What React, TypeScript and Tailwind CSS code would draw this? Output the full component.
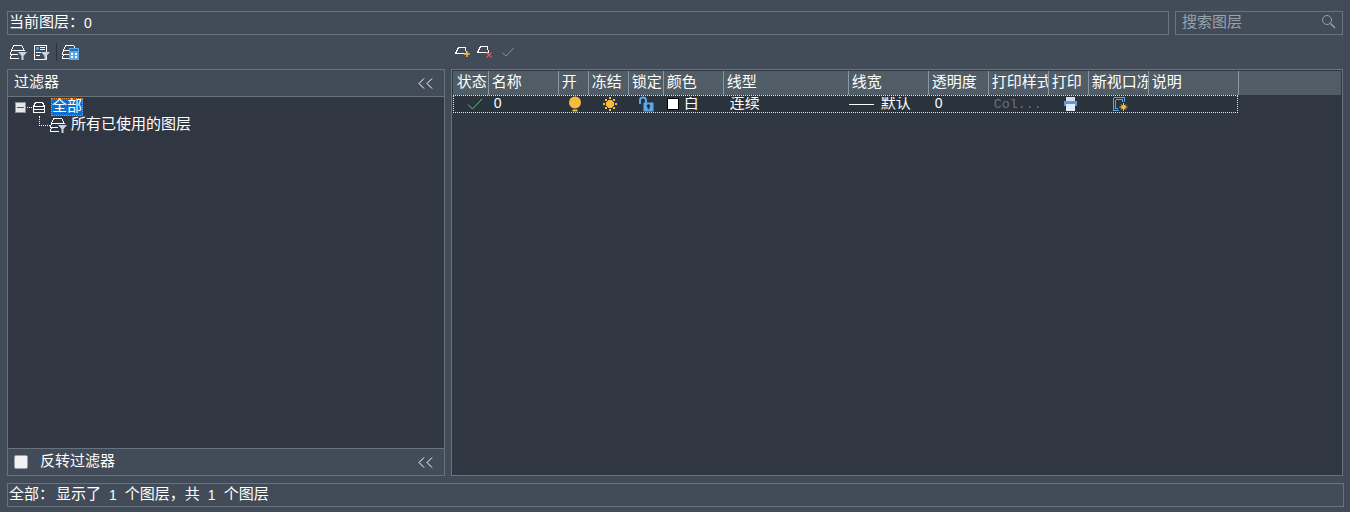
import { ReactNode } from 'react';

const FONT = "font-['Liberation_Mono','Noto_Sans_CJK_SC',monospace]";

type Column = { label: string; width: string; cell?: ReactNode };

// Digits in the dialog are plain ovals, a bit smaller than the CJK glyphs
function Digit({ children, className = '' }: { children: ReactNode; className?: string }) {
  return <span className={`font-['Liberation_Sans',sans-serif] text-[14px] ${className}`}>{children}</span>;
}

// Stacked layer outline shared by the toolbar and tree icons
function LayerLines({ stroke = '#fff' }: { stroke?: string }) {
  return (
    <g fill="none" stroke={stroke} strokeWidth="1" shapeRendering="crispEdges">
      <path d="M3.5 1.5H11.5L14.5 6.5H1.5Z" />
      <path d="M1.5 6.5L0.5 9.5V10.5H8" />
      <path d="M1.5 10.5L0.5 13.5V14.5H9" />
    </g>
  );
}

function Funnel({ x = 8, y = 8 }: { x?: number; y?: number }) {
  return <path d={`M${x} ${y}H${x + 9}L${x + 5.5} ${y + 4}V${y + 8}H${x + 3.5}V${y + 4}Z`} fill="#c5d5e6" />;
}

function LayerFilterIcon() {
  return (
    <svg width="18" height="17" viewBox="0 0 18 17">
      <LayerLines />
      <Funnel />
    </svg>
  );
}

function PropertyFilterIcon() {
  return (
    <svg width="18" height="17" viewBox="0 0 18 17">
      <path d="M1.5 1.5H13.5V15.5H1.5Z" fill="none" stroke="#fff" shapeRendering="crispEdges" />
      <rect x="3" y="3" width="3" height="3" fill="#4a9fe0" />
      <path d="M7 3.5H12M7 5.5H12M3 8.5H8M3 11.5H7" stroke="#fff" shapeRendering="crispEdges" />
      <Funnel />
    </svg>
  );
}

function LayerStatesIcon() {
  return (
    <svg width="18" height="17" viewBox="0 0 18 17">
      <LayerLines />
      <rect x="7" y="4" width="10" height="12" fill="#5aa9e6" />
      <rect x="8" y="5" width="8" height="2" fill="#2d6ea3" />
      <path d="M9 9h2v2H9zM13 9h2v2h-2zM9 12h2v2H9zM13 12h2v2h-2z" fill="#fff" />
    </svg>
  );
}

function NewLayerIcon() {
  return (
    <svg width="16" height="14" viewBox="0 0 16 14">
      <path d="M3.5 2.5H10.5L11.5 8.5H0.5Z" fill="none" stroke="#fff" shapeRendering="crispEdges" />
      <path d="M12 6v6M9 9h6" stroke="#f5b642" strokeWidth="1.5" />
    </svg>
  );
}

function DeleteLayerIcon() {
  return (
    <svg width="16" height="14" viewBox="0 0 16 14">
      <path d="M3.5 1.5H10.5L11.5 7.5H0.5Z" fill="none" stroke="#fff" shapeRendering="crispEdges" />
      <path d="M9.5 7.5l5 5M14.5 7.5l-5 5" stroke="#e0565b" strokeWidth="1.2" />
    </svg>
  );
}

function Check({ color, size = 16 }: { color: string; size?: number }) {
  return (
    <svg width={size} height={size - 4} viewBox="0 0 16 12">
      <path d="M1 6.5L5.5 11L15 1" fill="none" stroke={color} strokeWidth="1" />
    </svg>
  );
}

function BulbIcon() {
  return (
    <svg width="14" height="17" viewBox="0 0 14 17">
      <circle cx="7" cy="6.5" r="6" fill="#f5bd3f" />
      <rect x="4.5" y="13.5" width="5" height="2" fill="#f5bd3f" />
    </svg>
  );
}

function SunIcon() {
  return (
    <svg width="14" height="14" viewBox="0 0 14 14" shapeRendering="crispEdges">
      <path d="M5 3h4v1h1v1h1v4h-1v1H9v1H5v-1H4V9H3V5h1V4h1z" fill="#f5bd3f" />
      <path d="M6 0h2v2H6zM6 12h2v2H6zM0 6h2v2H0zM12 6h2v2h-2zM2 2h2v2H2zM10 2h2v2h-2zM2 10h2v2H2zM10 10h2v2h-2z" fill="#f5bd3f" />
    </svg>
  );
}

function LockIcon() {
  return (
    <svg width="15" height="16" viewBox="0 0 15 16">
      <path d="M1 8V4C1 0.5 7 0.5 7 4V7" fill="none" stroke="#5aa9e6" strokeWidth="2" />
      <rect x="4.5" y="6.5" width="10" height="9" fill="#5aa9e6" />
      <circle cx="9.5" cy="10" r="1.8" fill="#27303a" />
      <rect x="8.7" y="10" width="1.6" height="3.5" fill="#27303a" />
    </svg>
  );
}

function PrinterIcon() {
  return (
    <svg width="13" height="14" viewBox="0 0 13 14" shapeRendering="crispEdges">
      <rect x="2" y="0" width="9" height="4" fill="#d5dff0" />
      <rect x="0" y="4" width="13" height="5" fill="#5d9bd8" />
      <rect x="2" y="7" width="9" height="7" fill="#e3eaf8" />
    </svg>
  );
}

function ViewportIcon() {
  return (
    <svg width="15" height="15" viewBox="0 0 15 15">
      <path d="M0.5 0.5H11.5V5M0.5 0.5V13.5H6" fill="none" stroke="#5aa9e6" shapeRendering="crispEdges" />
      <path d="M2.5 2.5H9.5V5M2.5 2.5V11.5H5" fill="none" stroke="#5aa9e6" shapeRendering="crispEdges" />
      <circle cx="10.5" cy="10" r="2.2" fill="#f5bd3f" />
      <path d="M10.5 6v8M6.5 10h8M8 7.5l5 5M13 7.5l-5 5" stroke="#f5bd3f" />
    </svg>
  );
}

const columns: Column[] = [
  { label: '状态', width: 'w-[35px]', cell: <div className="flex justify-center pl-[8px]"><Check color="#63c07a" /></div> },
  { label: '名称', width: 'w-[70px]', cell: <Digit className="pl-[5px]">0</Digit> },
  { label: '开', width: 'w-[30px]', cell: <div className="flex justify-center pl-[2px]"><BulbIcon /></div> },
  { label: '冻结', width: 'w-[40px]', cell: <div className="flex justify-center pl-[2px]"><SunIcon /></div> },
  { label: '锁定', width: 'w-[35px]', cell: <div className="flex justify-center"><LockIcon /></div> },
  {
    label: '颜色',
    width: 'w-[60px]',
    cell: (
      <div className="flex items-center gap-[5px] pl-[3px]">
        <div className="h-[12px] w-[12px] border border-black bg-white" />
        <span>白</span>
      </div>
    ),
  },
  { label: '线型', width: 'w-[125px]', cell: <span className="pl-[6px]">连续</span> },
  {
    label: '线宽',
    width: 'w-[80px]',
    cell: (
      <div className="flex items-center gap-[7px]">
        <div className="h-px w-[25px] bg-white" />
        <span>默认</span>
      </div>
    ),
  },
  { label: '透明度', width: 'w-[60px]', cell: <Digit className="pl-[6px]">0</Digit> },
  { label: '打印样式', width: 'w-[60px]', cell: <span className="pl-[5px] text-[13.33px] text-[#6b7178]">Col...</span> },
  { label: '打印', width: 'w-[40px]', cell: <div className="flex justify-center pl-[4px]"><PrinterIcon /></div> },
  { label: '新视口冻结', width: 'w-[60px]', cell: <div className="flex justify-center pl-[4px]"><ViewportIcon /></div> },
  { label: '说明', width: 'w-[90px]' },
];

function Collapse() {
  return (
    <svg width="15" height="11" viewBox="0 0 15 11">
      <path d="M6 0.5L1 5.5L6 10.5M14 0.5L9 5.5L14 10.5" fill="none" stroke="#fff" strokeWidth="1" />
    </svg>
  );
}

export default function App() {
  return (
    <div className={`flex h-[512px] w-[1350px] flex-col overflow-hidden bg-[#424c58] pl-[7px] pr-[7px] pt-[11px] text-[15px] leading-none text-white ${FONT}`}>
      {/* Current layer + search */}
      <div className="flex h-[24px] gap-[6px]">
        <div className="flex w-[1162px] items-center border border-[#69737d] pl-[1px]">
          当前图层：<Digit>0</Digit>
        </div>
        <div className="flex w-[168px] items-center justify-between border border-[#69737d] pl-[6px] pr-[6px] text-[#98a3ae]">
          <span>搜索图层</span>
          <svg width="15" height="15" viewBox="0 0 15 15" className="mb-[3px]">
            <circle cx="6" cy="6" r="4.5" fill="none" stroke="#8ea0b4" />
            <path d="M9.5 9.5L14 14" stroke="#8ea0b4" strokeWidth="1.5" />
          </svg>
        </div>
      </div>

      {/* Toolbars */}
      <div className="flex h-[34px] items-center">
        <div className="flex w-[444px] items-center gap-[5px] pl-[3px]">
          <LayerFilterIcon />
          <PropertyFilterIcon />
          <div className="h-[18px] w-px bg-[#2a323c]" />
          <LayerStatesIcon />
        </div>
        <div className="flex items-center gap-[6px] pl-[4px]">
          <NewLayerIcon />
          <DeleteLayerIcon />
          <div className="ml-[2px]">
            <Check color="#63c07a" size={14} />
          </div>
        </div>
      </div>

      <div className="flex h-[407px] gap-[6px]">
        {/* Filter panel */}
        <div className="flex w-[438px] flex-col border border-[#69737d]">
          <div className="flex h-[27px] items-center justify-between border-b border-[#69737d] pl-[6px] pr-[11px] pt-px">
            <span>过滤器</span>
            <Collapse />
          </div>
          <div className="flex-1 bg-[#303742] pl-[7px] pt-px">
            <div className="flex h-[18px] items-center">
              <div className="flex h-[11px] w-[11px] items-center justify-center border border-[#8d939b] bg-[#e4e6ea]">
                <div className="h-px w-[7px] bg-[#2e5f9e]" />
              </div>
              <div className="ml-px w-[5px] border-t border-dotted border-white" />
              <svg width="14" height="13" viewBox="0 0 14 13" shapeRendering="crispEdges">
                <path d="M3.5 1.5H10.5L12.5 5.5H1.5ZM1.5 5.5V8.5H12.5V5.5M1.5 8.5V11.5H12.5V8.5" fill="none" stroke="#fff" />
              </svg>
              <span className="ml-[5px] flex h-[18px] items-center border border-dotted border-[#f08a24] bg-[#0a6fd0]">全部</span>
            </div>
            <div className="flex h-[18px] items-center pl-[24px]">
              <div className="mb-[9px] h-[10px] w-[11px] border-b border-l border-dotted border-white" />
              <LayerFilterIcon />
              <span className="ml-[3px]">所有已使用的图层</span>
            </div>
          </div>
          <div className="flex h-[27px] items-center justify-between border-t border-[#69737d] pl-[6px] pr-[11px]">
            <div className="flex items-center gap-[12px]">
              <div className="h-[14px] w-[14px] rounded-[2px] border border-[#9a9fa6] bg-[#f2f2f2]" />
              <span>反转过滤器</span>
            </div>
            <Collapse />
          </div>
        </div>

        {/* Layer table */}
        <div className="w-[893px] border border-[#69737d] bg-[#303742] pl-px pr-px pt-px">
          <div className="flex h-[24px] bg-[#505d67] pl-px">
            {columns.map(col => (
              <div key={col.label} className={`flex shrink-0 items-center overflow-hidden whitespace-nowrap border-r border-[#8b96a0] pl-[3px] pt-px ${col.width}`}>
                {col.label}
              </div>
            ))}
          </div>
          <div className="flex h-[18px] w-[785px] items-center border border-dotted border-[#e4e6e8] bg-[#2a323c]">
            {columns.map(col => (
              <div key={col.label} className={`shrink-0 overflow-hidden whitespace-nowrap ${col.width}`}>
                {col.cell}
              </div>
            ))}
          </div>
        </div>
      </div>

      {/* Status bar */}
      <div className="mt-[7px] flex h-[24px] w-[1337px] items-center border border-[#69737d] pl-px whitespace-pre">
        <span className="mr-[2px]">全部：</span>显示了<Digit className="mx-[8px]">1</Digit>个图层，共<Digit className="mx-[8px]">1</Digit>个图层
      </div>
    </div>
  );
}
